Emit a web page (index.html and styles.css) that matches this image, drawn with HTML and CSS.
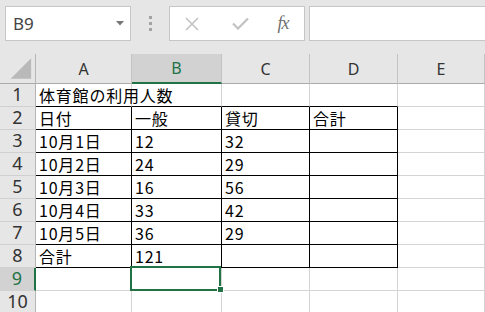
FILE: index.html
```html
<!DOCTYPE html>
<html lang="ja">
<head>
    <meta charset="UTF-8">
    <title>体育館の利用人数</title>
    <link rel="stylesheet" href="styles.css">
</head>
<body>

    <!-- Formula bar -->
    <div class="topbar">
        <div class="namebox">
            <span>B9</span>
            <svg class="drop" width="8" height="5" viewBox="0 0 8 5"><polygon points="0,0 8,0 4,4.5" fill="#777"/></svg>
        </div>
        <div class="grip"><i></i><i></i><i></i></div>
        <div class="fbtns">
            <div class="slot s1">
                <svg width="14" height="14" viewBox="0 0 14 14"><path d="M1 1 L13 13 M13 1 L1 13" stroke="#c2c2c2" stroke-width="1.6" fill="none"/></svg>
            </div>
            <div class="slot s2">
                <svg width="17" height="13" viewBox="0 0 17 13"><path d="M1 6.5 L6 11.5 L16 1.5" stroke="#c2c2c2" stroke-width="2.2" fill="none"/></svg>
            </div>
            <div class="slot s3"><span class="fx">fx</span></div>
        </div>
        <div class="finput"></div>
    </div>

    <!-- Sheet -->
    <div class="sheet">
        <div class="corner hd">
            <svg width="36" height="30" viewBox="0 0 36 30"><polygon points="32,4 32,25 11,25" fill="#b9b9b9"/></svg>
        </div>
        <div class="colh hd">A</div>
        <div class="colh hd sel">B</div>
        <div class="colh hd">C</div>
        <div class="colh hd">D</div>
        <div class="colh hd">E</div>

        <div class="rowh hd">1</div>
        <div class="cell bb">体育館の利用人数</div>
        <div class="cell bb"></div>
        <div class="cell bb"></div>
        <div class="cell bb"></div>
        <div class="cell"></div>

        <div class="rowh hd">2</div>
        <div class="cell b">日付</div>
        <div class="cell b">一般</div>
        <div class="cell b">貸切</div>
        <div class="cell b">合計</div>
        <div class="cell"></div>

        <div class="rowh hd">3</div>
        <div class="cell b">10月1日</div>
        <div class="cell b">12</div>
        <div class="cell b">32</div>
        <div class="cell b"></div>
        <div class="cell"></div>

        <div class="rowh hd">4</div>
        <div class="cell b">10月2日</div>
        <div class="cell b">24</div>
        <div class="cell b">29</div>
        <div class="cell b"></div>
        <div class="cell"></div>

        <div class="rowh hd">5</div>
        <div class="cell b">10月3日</div>
        <div class="cell b">16</div>
        <div class="cell b">56</div>
        <div class="cell b"></div>
        <div class="cell"></div>

        <div class="rowh hd">6</div>
        <div class="cell b">10月4日</div>
        <div class="cell b">33</div>
        <div class="cell b">42</div>
        <div class="cell b"></div>
        <div class="cell"></div>

        <div class="rowh hd">7</div>
        <div class="cell b">10月5日</div>
        <div class="cell b">36</div>
        <div class="cell b">29</div>
        <div class="cell b"></div>
        <div class="cell"></div>

        <div class="rowh hd">8</div>
        <div class="cell b">合計</div>
        <div class="cell b">121</div>
        <div class="cell b"></div>
        <div class="cell b"></div>
        <div class="cell"></div>

        <div class="rowh hd sel">9</div>
        <div class="cell"></div>
        <div class="cell active"></div>
        <div class="cell"></div>
        <div class="cell"></div>
        <div class="cell"></div>

        <div class="rowh hd">10</div>
        <div class="cell"></div>
        <div class="cell"></div>
        <div class="cell"></div>
        <div class="cell"></div>
        <div class="cell"></div>
    </div>

</body>
</html>
```

FILE: styles.css
```css
body {
    margin: 0;
    background-color: #fff;
    font-family: 'Noto Sans CJK JP', sans-serif;
    overflow: hidden;
}

/* Formula bar */
.topbar {
    height: 54px;
    box-sizing: border-box;
    padding-top: 6px;
    background-color: #e6e6e6;
    display: flex;
    align-items: flex-start;
}

.namebox {
    margin-left: 5px;
    width: 126px;
    height: 35px;
    box-sizing: border-box;
    border: 1px solid #c6c6c6;
    background-color: #fff;
    display: flex;
    align-items: center;
    justify-content: space-between;
    padding: 0 6px 0 7px;
    font-family: 'Noto Sans', sans-serif;
    font-size: 17px;
    color: #444;
}

.grip {
    width: 38px;
    display: flex;
    flex-direction: column;
    align-items: center;
    gap: 3px;
    margin-top: 10px;
}

.grip i {
    width: 3px;
    height: 3px;
    background-color: #a3a3a3;
}

.fbtns {
    width: 136px;
    height: 35px;
    box-sizing: border-box;
    border: 1px solid #c6c6c6;
    background-color: #fff;
    display: flex;
    align-items: center;
    margin-right: 4px;
}

.slot {
    display: flex;
    justify-content: center;
    align-items: center;
    height: 100%;
}

.s1 { width: 44px; }
.s2 { width: 52px; }
.s3 { width: 34px; }

.fx {
    font-family: 'Liberation Serif', serif;
    font-style: italic;
    font-size: 18px;
    color: #6f6f6f;
    letter-spacing: -1px;
}

.finput {
    flex: 1;
    height: 35px;
    box-sizing: border-box;
    border: 1px solid #c6c6c6;
    border-right: none;
    background-color: #fff;
}

/* Sheet grid */
.sheet {
    display: grid;
    grid-template-columns: 36px 96px 90px 88px 88px 1fr;
    grid-template-rows: 30px repeat(10, 23px);
}

.sheet > div {
    box-sizing: border-box;
    border-right: 1px solid #d4d4d4;
    border-bottom: 1px solid #d4d4d4;
}

.hd {
    background-color: #e6e6e6;
    font-family: 'Noto Sans', sans-serif;
    color: #333;
    display: flex;
    align-items: center;
    justify-content: center;
}

.sheet > .colh {
    font-size: 16px;
    border-right-color: #c3c3c3;
    border-bottom-color: #ababab;
}

.sheet > .corner {
    border-right-color: #b5b5b5;
    border-bottom-color: #ababab;
}

.sheet > .rowh {
    font-size: 18px;
    border-right-color: #b5b5b5;
    border-bottom-color: #d0d0d0;
    line-height: 18px;
    padding-bottom: 2px;
}

.sheet > .colh.sel {
    background-color: #d2d2d2;
    color: #217346;
    border-bottom: 2px solid #217346;
}

.sheet > .rowh.sel {
    background-color: #d2d2d2;
    color: #217346;
    border-right: 2px solid #217346;
}

.cell {
    font-size: 16px;
    line-height: 22px;
    padding-left: 3px;
    letter-spacing: 0.8px;
    color: #000;
    white-space: nowrap;
}

.sheet > .cell.bb {
    border-bottom-color: #000;
}

.sheet > .cell.b {
    border-right-color: #000;
    border-bottom-color: #000;
}

/* Active cell */
.cell.active {
    position: relative;
}

.cell.active::after {
    content: '';
    position: absolute;
    top: -2px;
    left: -2px;
    right: 0;
    bottom: -1px;
    border: 2px solid #217346;
}

.cell.active::before {
    content: '';
    position: absolute;
    right: -3px;
    bottom: -3px;
    width: 5px;
    height: 5px;
    background-color: #217346;
    border: 1px solid #fff;
    z-index: 2;
}
```
